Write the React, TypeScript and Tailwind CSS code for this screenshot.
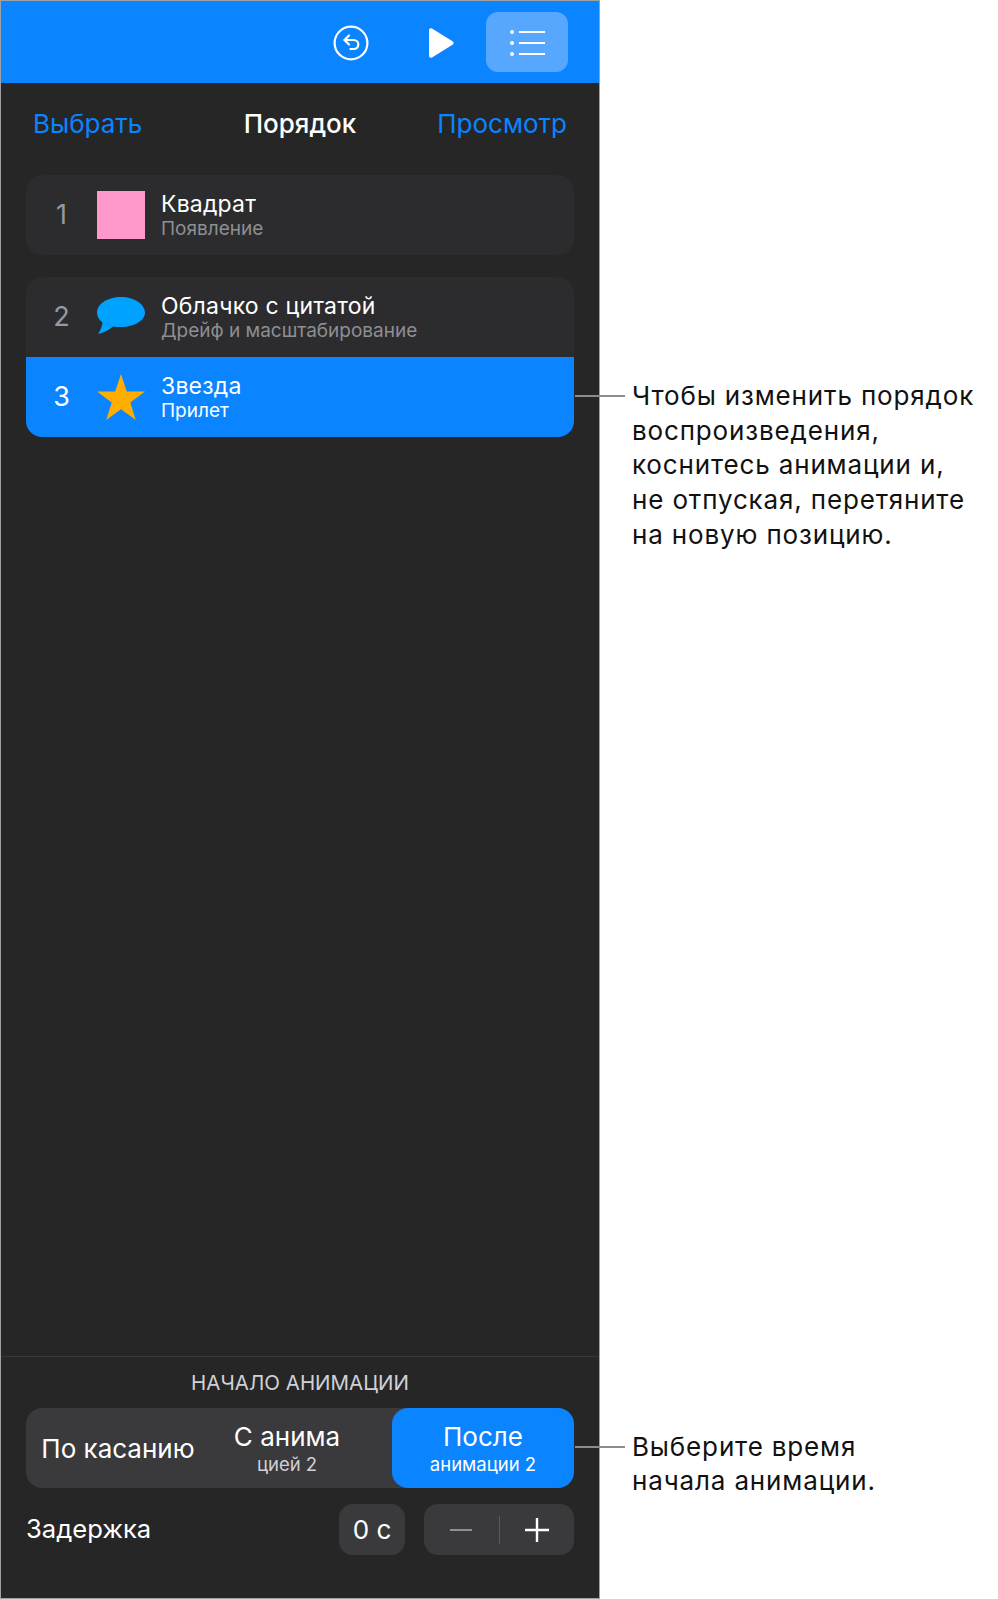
const font = "font-['Inter','Liberation_Sans',sans-serif]";

function UndoIcon() {
    return (
        <svg className="w-[36px] h-[36px]" viewBox="0 0 36 36" fill="none" stroke="white" strokeWidth="2.2" strokeLinecap="round" strokeLinejoin="round">
            <circle cx="18" cy="18" r="16.4"/>
            <path d="M16 10.5 11.5 15l4.5 4.5"/>
            <path d="M11.5 15h9c3 0 4.8 2 4.8 4.5S23.500 24 20.500 24h-3"/>
        </svg>
    );
}

function PlayIcon() {
    return (
        <svg className="w-[28px] h-[32px]" viewBox="0 0 28 32" fill="white">
            <path d="M2 3.500C2 1.500 3.500.7 5 1.600l20.500 12.600c1.400.9 1.400 2.700 0 3.600L5 30.400c-1.500.9-3 .1-3-1.900z"/>
        </svg>
    );
}

function ListIcon() {
    return (
        <svg className="w-[36px] h-[28px]" viewBox="0 0 36 28" fill="white">
            <circle cx="3" cy="3" r="2"/>
            <circle cx="3" cy="14" r="2"/>
            <circle cx="3" cy="25" r="2"/>
            <rect x="10" y="2" width="26" height="2"/>
            <rect x="10" y="13" width="26" height="2"/>
            <rect x="10" y="24" width="26" height="2"/>
        </svg>
    );
}

function Bubble() {
    return (
        <svg className="w-[48px] h-[44px]" viewBox="0 0 48 44" fill="#00a2ff">
            <path d="M24 2C10.700 2 0 9 0 17.500c0 4.300 2.200 7.500 5.500 10-.3 4-2.500 8.500-4.500 11.500 6-1.500 11-4 15-7.500 2.600.5 5.300.5 8 .5 13.300 0 24-6.500 24-14.500S37.300 2 24 2z"/>
        </svg>
    );
}

function Star() {
    return (
        <svg className="w-[48px] h-[46px]" viewBox="0 0 48 46" fill="#ffae00">
            <path d="M24 0l5.800 17.500H48L33.300 28.400 38.800 46 24 35.200 9.200 46l5.500-17.600L0 17.500h18.200z"/>
        </svg>
    );
}

function Row({num, title, sub, icon, active}: { num: string, title: string, sub: string, icon: React.ReactNode, active?: boolean }) {
    return (
        <div className={"flex items-center h-[80px] " + (active ? "bg-[#0a84ff]" : "")}>
            <div className={"w-[71px] mt-[1px] text-center text-[27px] " + (active ? "text-white" : "text-[#98989d]")}>{num}</div>
            <div className="w-[48px] flex justify-center">{icon}</div>
            <div className="ml-[16px] flex flex-col">
                <div className="text-[23px] leading-[28px] tracking-[0.2px] text-white">{title}</div>
                <div className={"text-[19px] leading-[22px] " + (active ? "text-white" : "text-[#8e8e93]")}>{sub}</div>
            </div>
        </div>
    );
}

function Callout({lines, className}: { lines: string[], className: string }) {
    return (
        <div className={"flex items-start " + className}>
            <div className="w-[50px] h-[2px] mt-[16px] ml-[-25px] mr-[7px] bg-[#8c8c8c] shrink-0"/>
            <div className="text-[26px] leading-[34.700px] tracking-[0.85px] text-[#111]">
                {lines.map((line) => <div key={line} className="whitespace-nowrap">{line}</div>)}
            </div>
        </div>
    );
}

export default function App() {
    return (
        <div className={"flex w-[998px] h-[1599px] bg-white overflow-hidden " + font}>
            <div className="flex flex-col w-[600px] shrink-0 h-full bg-[#262626] border border-[#a0a0a0]">
                <div className="flex items-center justify-end h-[82px] bg-[#0a84ff] shrink-0 pr-[31px]">
                    <div className="mt-[2px] flex"><UndoIcon/></div>
                    <div className="ml-[58px] mr-[31px] mt-[2px] flex"><PlayIcon/></div>
                    <div className="flex items-center justify-center w-[82px] h-[60px] rounded-[12px] bg-[#57a7ff]">
                        <div className="mt-[1px] flex"><ListIcon/></div>
                    </div>
                </div>

                <div className="grid grid-cols-3 items-center h-[81px] pl-[32px] pr-[32px] text-[26px] shrink-0">
                    <span className="text-[#0a84ff]">Выбрать</span>
                    <span className="text-white font-medium text-center">Порядок</span>
                    <span className="text-[#0a84ff] text-right">Просмотр</span>
                </div>

                <div className="mx-[25px] mt-[11px] rounded-[16px] bg-[#2c2c2e] overflow-hidden">
                    <Row num="1" title="Квадрат" sub="Появление" icon={<div className="w-[48px] h-[48px] bg-[#ff99cc]"/>}/>
                </div>

                <div className="mx-[25px] mt-[22px] rounded-[16px] bg-[#2c2c2e] overflow-hidden">
                    <Row num="2" title="Облачко с цитатой" sub="Дрейф и масштабирование" icon={<Bubble/>}/>
                    <Row num="3" title="Звезда" sub="Прилет" icon={<Star/>} active/>
                </div>

                <div className="mt-auto border-t border-[#38383a] pt-[13px] pb-[43px]">
                    <div className="text-center text-[20.500px] leading-[26px] text-[#d1d1d6]">НАЧАЛО АНИМАЦИИ</div>
                    <div className="flex mx-[25px] mt-[12px] h-[80px] rounded-[16px] bg-[#3a3a3c] text-white">
                        <div className="w-[184px] flex items-center justify-center text-[26px]">По касанию</div>
                        <div className="w-[154px] flex flex-col items-center justify-center">
                            <div className="text-[26px] leading-[32px]">С анима</div>
                            <div className="text-[18.500px] leading-[22px] text-[#d1d1d6]">цией 2</div>
                        </div>
                        <div className="w-[182px] ml-auto flex flex-col items-center justify-center rounded-[16px] bg-[#0a84ff]">
                            <div className="text-[26px] leading-[32px]">После</div>
                            <div className="text-[18.500px] leading-[22px]">анимации 2</div>
                        </div>
                    </div>
                    <div className="flex items-center mx-[25px] mt-[16px] h-[51px] text-white">
                        <div className="text-[25.600px] flex-1">Задержка</div>
                        <div className="flex items-center justify-center w-[66px] h-full rounded-[14px] bg-[#3a3a3c] text-[26px]">0 с</div>
                        <div className="flex items-center w-[150px] h-full ml-[19px] rounded-[14px] bg-[#3a3a3c]">
                            <div className="flex-1 flex justify-center">
                                <div className="w-[22px] h-[2px] bg-[#8e8e93]"/>
                            </div>
                            <div className="w-px h-[28px] bg-[#5a5a5e]"/>
                            <div className="flex-1 flex justify-center">
                                <svg className="w-[24px] h-[24px]" viewBox="0 0 24 24" stroke="white" strokeWidth="2.400">
                                    <path d="M0 12h24M12 0v24"/>
                                </svg>
                            </div>
                        </div>
                    </div>
                </div>
            </div>

            <div className="flex flex-col flex-1">
                <Callout className="mt-[379px]" lines={["Чтобы изменить порядок", "воспроизведения,", "коснитесь анимации и,", "не отпуская, перетяните", "на новую позицию."]}/>
                <Callout className="mt-auto mb-[100px]" lines={["Выберите время", "начала анимации."]}/>
            </div>
        </div>
    );
}
